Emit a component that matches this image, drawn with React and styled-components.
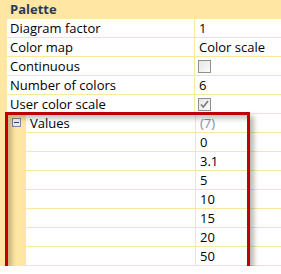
import React from 'react';
import styled, { createGlobalStyle } from 'styled-components';

const GlobalStyle = createGlobalStyle`
	html, body {
		margin: 0;
		padding: 0;
		background: #fff;
	}
	body {
		font-family: "Open Sans", "DejaVu Sans", sans-serif;
		font-size: 13px;
		color: #000;
	}
`;

const rows = [
	{ label: 'Diagram factor', value: '1' },
	{ label: 'Color map', value: 'Color scale' },
	{ label: 'Continuous', check: false },
	{ label: 'Number of colors', value: '6' },
	{ label: 'User color scale', check: true }
];

const values = [ '0', '3.1', '5', '10', '15', '20', '50' ];

const CheckBox = ({ checked }) => (
	<Box>
		{checked && (
			<svg width='11' height='11' viewBox='0 0 11 11'>
				<path d='M2 5.5 L4.3 8 L9 2' fill='none' stroke='#7a7a7a' strokeWidth='1.6' />
			</svg>
		)}
	</Box>
);

const App = () => {
	return (
		<>
			<GlobalStyle />
			<Grid>
				<Header>Palette</Header>
				{rows.map((row) => (
					<Row key={row.label}>
						<Gutter />
						<Label>{row.label}</Label>
						<Value>{row.check === undefined ? row.value : <CheckBox checked={row.check} />}</Value>
					</Row>
				))}
				<Row>
					<Gutter wide>
						<Toggle />
					</Gutter>
					<Label wide>Values</Label>
					<Value muted>(7)</Value>
				</Row>
				{values.map((v) => (
					<Row key={v}>
						<Gutter wide />
						<Label wide />
						<Value>{v}</Value>
					</Row>
				))}
				<Highlight />
			</Grid>
		</>
	);
};

export default App;

const Grid = styled.div`
	position: relative;
	width: 281px;
	line-height: 18px;
`;

const Header = styled.div`
	height: 19px;
	background: #ffe7a3;
	padding-left: 10px;
	font-weight: 700;
	color: #2b3a57;
	line-height: 19px;
`;

const Row = styled.div`
	display: flex;
	height: 19px;
	box-sizing: border-box;
	border-bottom: 1px solid #fde5a2;
`;

const Gutter = styled.div`
	flex: none;
	width: ${(p) => (p.wide ? '26px' : '7px')};
	margin-bottom: -1px;
	background: #ffe7a3;
	position: relative;
`;

const Label = styled.div`
	flex: none;
	width: ${(p) => (p.wide ? '165px' : '184px')};
	padding-left: ${(p) => (p.wide ? '4px' : '3px')};
	border-right: 1px solid #fde5a2;
	white-space: nowrap;
	overflow: hidden;
	box-sizing: content-box;
`;

const Value = styled.div`
	flex: 1;
	padding-left: 4px;
	display: flex;
	align-items: center;
	color: ${(p) => (p.muted ? '#7c8db0' : '#000')};
`;

const Box = styled.div`
	width: 11px;
	height: 11px;
	margin-left: -1px;
	border: 1px solid #8f8f8f;
	background: linear-gradient(135deg, #e6e6e6, #fbfbfb);
	display: flex;
	align-items: center;
	justify-content: center;
`;

const Toggle = styled.div`
	position: absolute;
	left: 12px;
	top: 4px;
	width: 7px;
	height: 7px;
	border: 1px solid #7f8ba3;
	background: linear-gradient(135deg, #ffffff, #dfe3ea);

	&::after {
		content: '';
		position: absolute;
		left: 1px;
		top: 3px;
		width: 5px;
		height: 1px;
		background: #2c4577;
	}
`;

const Highlight = styled.div`
	position: absolute;
	left: 5px;
	top: 112px;
	width: 239px;
	height: 152px;
	border: 3px solid #c00000;
	pointer-events: none;
	box-shadow: 4px 4px 5px rgba(0, 0, 0, 0.28), inset 4px 4px 5px rgba(0, 0, 0, 0.22);
`;
